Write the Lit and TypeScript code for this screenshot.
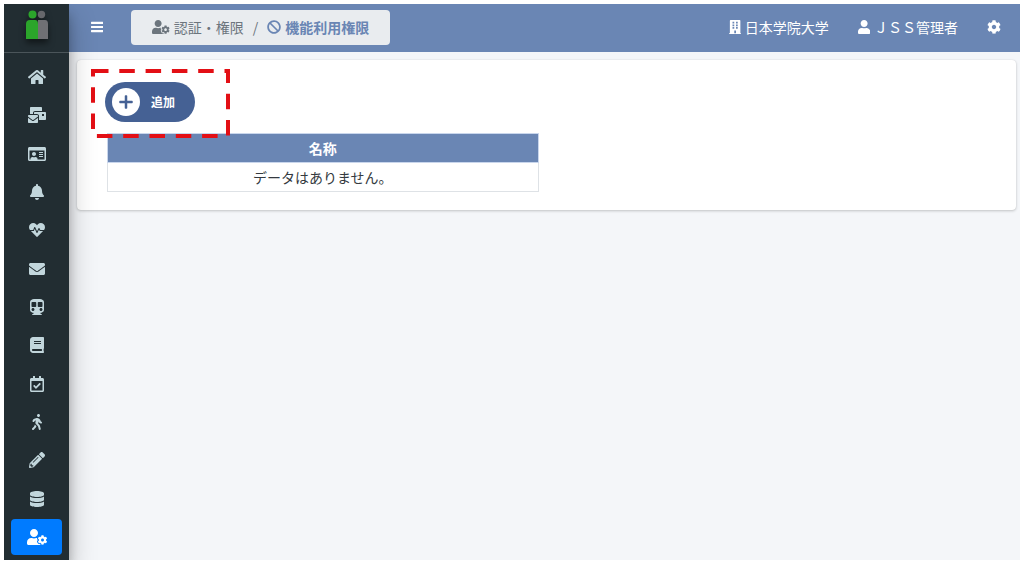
import { LitElement, html, css, svg } from "lit";
import { customElement, property } from "lit/decorators.js";
import { classMap } from "lit/directives/class-map.js";

interface Glyph {
  w: number;
  d: string;
}

const ICONS: Record<string, Glyph> = {
  home: { w: 576, d: "M280.37 148.26L96 300.11V464a16 16 0 0 0 16 16l112.06-.29a16 16 0 0 0 15.92-16V368a16 16 0 0 1 16-16h64a16 16 0 0 1 16 16v95.64a16 16 0 0 0 16 16.05L464 480a16 16 0 0 0 16-16V300L295.67 148.26a12.19 12.19 0 0 0-15.3 0zM571.6 251.47L488 182.56V44.05a12 12 0 0 0-12-12h-56a12 12 0 0 0-12 12v72.61L318.47 43a48 48 0 0 0-61 0L4.34 251.47a12 12 0 0 0-1.6 16.9l25.5 31A12 12 0 0 0 45.15 301l235.22-193.74a12.19 12.19 0 0 1 15.3 0L530.9 301a12 12 0 0 0 16.9-1.6l25.5-31a12 12 0 0 0-1.7-16.93z" },
  mails: { w: 576, d: "M160 448c-25.6 0-51.2-22.4-64-32-64-44.8-83.2-60.8-96-70.4V480c0 17.67 14.33 32 32 32h256c17.67 0 32-14.33 32-32V345.6c-12.8 9.6-32 25.6-96 70.4-12.8 9.6-38.4 32-64 32zm128-192H32c-17.67 0-32 14.33-32 32v16c25.6 19.2 22.4 19.2 115.2 86.4 9.6 6.4 28.8 25.6 44.8 25.6s35.2-19.2 44.8-22.4c92.8-67.2 89.6-67.2 115.2-86.4V288c0-17.67-14.33-32-32-32zm256-96H224c-17.67 0-32 14.33-32 32v32h96c33.21 0 60.59 25.42 63.71 57.82l.29-.22V416h192c17.67 0 32-14.33 32-32V192c0-17.67-14.33-32-32-32zm-32 128h-64v-64h64v64zm-352-96c0-35.29 28.71-64 64-64h224V32c0-17.67-14.33-32-32-32H96C78.33 0 64 14.33 64 32v192h96v-32z" },
  idCard: { w: 576, d: "M528 32H48C21.5 32 0 53.5 0 80v352c0 26.5 21.5 48 48 48h480c26.5 0 48-21.5 48-48V80c0-26.5-21.5-48-48-48zm0 400H303.2c.9-4.5.8 3.6.8-22.4 0-31.8-30.1-57.6-67.2-57.6-10.8 0-18.7 8-44.8 8-26.9 0-33.4-8-44.8-8-37.1 0-67.2 25.8-67.2 57.6 0 26-.2 17.9.8 22.4H48V144h480v288zm-168-80h112c4.4 0 8-3.6 8-8v-16c0-4.4-3.6-8-8-8H360c-4.4 0-8 3.6-8 8v16c0 4.4 3.6 8 8 8zm0-64h112c4.4 0 8-3.6 8-8v-16c0-4.4-3.6-8-8-8H360c-4.4 0-8 3.6-8 8v16c0 4.4 3.6 8 8 8zm0-64h112c4.4 0 8-3.6 8-8v-16c0-4.4-3.6-8-8-8H360c-4.4 0-8 3.6-8 8v16c0 4.4 3.6 8 8 8zm-168 96c35.3 0 64-28.7 64-64s-28.7-64-64-64-64 28.7-64 64 28.7 64 64 64z" },
  bell: { w: 448, d: "M224 512c35.32 0 63.97-28.65 63.97-64H160.03c0 35.35 28.65 64 63.97 64zm215.39-149.71c-19.32-20.76-55.47-51.99-55.47-154.29 0-77.7-54.48-139.9-127.94-155.16V32c0-17.67-14.32-32-31.98-32s-31.98 14.33-31.98 32v20.84C118.56 68.1 64.08 130.3 64.08 208c0 102.3-36.15 133.53-55.47 154.29-6 6.45-8.66 14.16-8.61 21.71.11 16.4 12.98 32 32.1 32h383.8c19.12 0 32-15.6 32.1-32 .05-7.55-2.61-15.27-8.61-21.71z" },
  heart: { w: 512, d: "M320.2 243.8l-49.7 99.4c-6 12.1-23.4 11.7-28.9-.6l-56.9-126.3-30 71.7H60.6l182.5 186.5c7.1 7.3 18.6 7.3 25.7 0L451.4 288H342.3l-22.1-44.2zM473.7 73.9l-2.4-2.5c-51.5-52.6-135.8-52.6-187.4 0L256 100l-27.9-28.5c-51.5-52.7-135.9-52.7-187.4 0l-2.4 2.4C-10.4 123.7-12.5 203 31 256h102.4l35.9-86.2c5.4-12.9 23.6-13.2 29.4-.4l58.2 129.3 49-97.9c5.9-11.8 22.7-11.8 28.6 0l27.6 55.2H481c43.5-53 41.4-132.3-7.3-182.1z" },
  envelope: { w: 512, d: "M502.3 190.8c3.9-3.1 9.7-.2 9.7 4.7V400c0 26.5-21.5 48-48 48H48c-26.5 0-48-21.5-48-48V195.6c0-5 5.7-7.8 9.7-4.7 22.4 17.4 52.1 39.5 154.1 113.6 21.1 15.4 56.7 47.8 92.2 47.6 35.7.3 72-32.8 92.3-47.6 102-74.1 131.6-96.3 154-113.7zM256 320c23.2.4 56.6-29.2 73.4-41.4 132.7-96.3 142.8-104.7 173.4-128.7 5.8-4.5 9.2-11.5 9.2-18.9v-19c0-26.5-21.5-48-48-48H48c-26.5 0-48 21.5-48 48v19c0 7.4 3.4 14.3 9.2 18.9 30.6 23.9 40.7 32.4 173.4 128.7 16.8 12.2 50.2 41.8 73.4 41.4z" },
  subway: { w: 448, d: "M448 96v256c0 51.815-61.624 96-130.022 96l62.98 49.721C386.905 502.417 383.562 512 376 512H72c-7.578 0-10.892-9.594-4.957-14.279L130.022 448C61.82 448 0 403.954 0 352V96C0 42.981 64 0 128 0h192c65 0 128 42.981 128 96zM200 232V120c0-13.255-10.745-24-24-24H72c-13.255 0-24 10.745-24 24v112c0 13.255 10.745 24 24 24h104c13.255 0 24-10.745 24-24zm200 0V120c0-13.255-10.745-24-24-24H272c-13.255 0-24 10.745-24 24v112c0 13.255 10.745 24 24 24h104c13.255 0 24-10.745 24-24zm-48 56c-26.51 0-48 21.49-48 48s21.49 48 48 48 48-21.49 48-48-21.49-48-48-48zm-256 0c-26.51 0-48 21.49-48 48s21.49 48 48 48 48-21.49 48-48-21.49-48-48-48z" },
  book: { w: 448, d: "M448 360V24c0-13.3-10.7-24-24-24H96C43 0 0 43 0 96v320c0 53 43 96 96 96h328c13.3 0 24-10.7 24-24v-16c0-7.5-3.5-14.3-8.9-18.7-4.2-15.4-4.2-59.3 0-74.7 5.4-4.3 8.9-11.1 8.9-18.6zM128 134c0-3.3 2.7-6 6-6h212c3.3 0 6 2.7 6 6v20c0 3.3-2.7 6-6 6H134c-3.3 0-6-2.7-6-6v-20zm0 64c0-3.3 2.7-6 6-6h212c3.3 0 6 2.7 6 6v20c0 3.3-2.7 6-6 6H134c-3.3 0-6-2.7-6-6v-20zm253.4 250H96c-17.7 0-32-14.3-32-32 0-17.6 14.4-32 32-32h285.4c-1.9 17.1-1.9 46.9 0 64z" },
  calendar: { w: 448, d: "M400 64h-48V12c0-6.627-5.373-12-12-12h-40c-6.627 0-12 5.373-12 12v52H160V12c0-6.627-5.373-12-12-12h-40c-6.627 0-12 5.373-12 12v52H48C21.49 64 0 85.49 0 112v352c0 26.51 21.49 48 48 48h352c26.51 0 48-21.49 48-48V112c0-26.51-21.49-48-48-48zm-6 400H54a6 6 0 0 1-6-6V160h352v298a6 6 0 0 1-6 6zm-52.849-200.65L198.842 404.519c-4.705 4.667-12.303 4.637-16.971-.068l-75.091-75.699c-4.667-4.705-4.637-12.303.068-16.971l22.719-22.536c4.705-4.667 12.303-4.637 16.97.069l44.104 44.461 111.072-110.181c4.705-4.667 12.303-4.637 16.971.068l22.536 22.718c4.667 4.705 4.636 12.303-.069 16.97z" },
  walking: { w: 320, d: "M208 96c26.5 0 48-21.5 48-48S234.5 0 208 0s-48 21.5-48 48 21.5 48 48 48zm94.5 149.1l-23.3-11.8-9.7-29.4c-14.7-44.6-55.7-75.8-102.2-75.9-36-.1-55.9 10.1-93.3 25.2-21.6 8.7-39.3 25.2-49.7 46.2L17.6 213c-7.8 15.8-1.5 35 14.2 42.9 15.6 7.9 34.6 1.5 42.5-14.3L81 228c3.5-7 9.3-12.5 16.5-15.4l26.8-10.8-15.2 60.7c-5.2 20.8.4 42.9 14.9 58.8l59.9 65.4c7.2 7.9 12.3 17.4 14.9 27.7l18.3 73.3c4.3 17.1 21.7 27.6 38.8 23.3 17.1-4.3 27.6-21.7 23.3-38.8l-22.2-89c-2.6-10.3-7.7-19.9-14.9-27.7l-45.5-49.7 17.2-68.7 5.5 16.5c5.3 16.1 16.7 29.4 31.7 37l23.3 11.8c15.6 7.9 34.6 1.5 42.5-14.3 7.7-15.7 1.4-35.1-14.3-43zM73.6 385.8c-3.2 8.1-8 15.4-14.2 21.5l-50 50.1c-12.5 12.5-12.5 32.8 0 45.3s32.7 12.5 45.2 0l59.4-59.4c6.1-6.1 10.9-13.4 14.2-21.5l13.5-33.8c-55.3-60.3-38.7-41.8-47.4-53.7l-20.7 51.5z" },
  pencil: { w: 512, d: "M497.9 142.1l-46.1 46.1c-4.7 4.7-12.3 4.7-17 0l-111-111c-4.7-4.7-4.7-12.3 0-17l46.1-46.1c18.7-18.7 49.1-18.7 67.9 0l60.1 60.1c18.8 18.7 18.8 49.1 0 67.9zM284.2 99.8L21.6 362.4.4 483.9c-2.9 16.4 11.4 30.6 27.8 27.8l121.5-21.3 262.6-262.6c4.7-4.7 4.7-12.3 0-17l-111-111c-4.8-4.7-12.4-4.7-17.1 0zM124.1 339.9c-5.5-5.5-5.5-14.3 0-19.8l154-154c5.5-5.5 14.3-5.5 19.8 0s5.5 14.3 0 19.8l-154 154c-5.5 5.5-14.3 5.5-19.8 0zM88 424h48v36.3l-64.5 11.3-31.1-31.1L51.7 376H88v48z" },
  database: { w: 448, d: "M448 73.143v45.714C448 159.143 347.667 192 224 192S0 159.143 0 118.857V73.143C0 32.857 100.333 0 224 0s224 32.857 224 73.143zM448 176v102.857C448 319.143 347.667 352 224 352S0 319.143 0 278.857V176c48.125 33.143 136.208 48.572 224 48.572S399.874 209.143 448 176zm0 160v102.857C448 479.143 347.667 512 224 512S0 479.143 0 438.857V336c48.125 33.143 136.208 48.572 224 48.572S399.874 369.143 448 336z" },
  userCog: { w: 640, d: "M610.5 373.3c2.6-14.1 2.6-28.5 0-42.6l25.8-14.9c3-1.7 4.3-5.2 3.3-8.5-6.7-21.6-18.2-41.2-33.2-57.4-2.3-2.5-6-3.1-9-1.4l-25.8 14.9c-10.9-9.3-23.4-16.5-36.9-21.3v-29.8c0-3.4-2.4-6.4-5.7-7.1-22.3-5-45-4.8-66.2 0-3.3.7-5.7 3.7-5.7 7.1v29.8c-13.5 4.8-26 12-36.9 21.3l-25.8-14.9c-2.9-1.7-6.7-1.1-9 1.4-15 16.2-26.5 35.8-33.2 57.4-1 3.3.4 6.8 3.3 8.5l25.8 14.9c-2.6 14.1-2.6 28.5 0 42.6l-25.8 14.9c-3 1.7-4.3 5.2-3.3 8.5 6.7 21.6 18.2 41.1 33.2 57.4 2.3 2.5 6 3.1 9 1.4l25.8-14.9c10.9 9.3 23.4 16.5 36.9 21.3v29.8c0 3.4 2.4 6.4 5.7 7.1 22.3 5 45 4.8 66.2 0 3.3-.7 5.7-3.7 5.7-7.1v-29.8c13.5-4.8 26-12 36.9-21.3l25.8 14.9c2.9 1.7 6.7 1.1 9-1.4 15-16.2 26.5-35.8 33.2-57.4 1-3.3-.4-6.8-3.3-8.5l-25.8-14.9zM496 400.5c-26.8 0-48.5-21.8-48.5-48.5s21.8-48.5 48.5-48.5 48.5 21.8 48.5 48.5-21.7 48.5-48.5 48.5zM224 256c70.7 0 128-57.3 128-128S294.7 0 224 0 96 57.3 96 128s57.3 128 128 128zm201.2 226.5c-2.3-1.2-4.6-2.6-6.8-3.9l-7.9 4.6c-6 3.4-12.8 5.3-19.6 5.3-10.9 0-21.4-4.6-28.9-12.6-18.3-19.8-32.3-43.9-40.2-69.6-5.5-17.7 1.9-36.4 17.9-45.7l7.9-4.6c-.1-2.6-.1-5.2 0-7.8l-7.9-4.6c-16-9.2-23.4-28-17.9-45.7.9-2.9 2.2-5.8 3.2-8.7-3.8-.3-7.5-1.2-11.4-1.2h-16.7c-22.2 10.2-46.9 16-72.9 16s-50.6-5.8-72.9-16h-16.7C60.2 288 0 348.2 0 422.4V464c0 26.5 21.5 48 48 48h352c10.1 0 19.5-3.2 27.2-8.5-1.2-3.8-2-7.7-2-11.8v-9.2z" },
  ban: { w: 512, d: "M256 8C119.034 8 8 119.033 8 256s111.034 248 248 248 248-111.034 248-248S392.967 8 256 8zm130.108 117.892c65.448 65.448 70 165.481 20.677 235.637L150.47 105.216c70.204-49.356 170.226-44.735 235.638 20.676zM125.892 386.108c-65.448-65.448-70-165.481-20.677-235.637L361.53 406.784c-70.203 49.356-170.226 44.736-235.638-20.676z" },
  building: { w: 448, d: "M436 480h-20V24c0-13.3-10.7-24-24-24H56C42.7 0 32 10.7 32 24v456H12c-6.6 0-12 5.4-12 12v20h448v-20c0-6.6-5.4-12-12-12zM128 64v64h64V64zM256 64v64h64V64zM128 160v64h64v-64zM256 160v64h64v-64zM128 256v64h64v-64zM256 256v64h64v-64zM192 384v96h64v-96z" },
  user: { w: 448, d: "M224 256c70.7 0 128-57.3 128-128S294.7 0 224 0 96 57.3 96 128s57.3 128 128 128zm89.6 32h-16.7c-22.2 10.2-46.9 16-72.9 16s-50.6-5.8-72.9-16h-16.7C60.2 288 0 348.2 0 422.4V464c0 26.5 21.5 48 48 48h352c26.5 0 48-21.5 48-48v-41.6c0-74.2-60.2-134.4-134.4-134.4z" },
  cog: { w: 512, d: "M487.4 315.7l-42.6-24.6c4.3-23.2 4.3-47 0-70.2l42.6-24.6c4.9-2.8 7.1-8.6 5.5-14-11.1-35.6-30-67.8-54.7-94.6-3.8-4.1-10-5.1-14.8-2.3L380.8 110c-17.9-15.4-38.5-27.3-60.8-35.1V25.8c0-5.6-3.9-10.5-9.4-11.7-36.7-8.2-74.3-7.8-109.2 0-5.5 1.2-9.4 6.1-9.4 11.7V75c-22.2 7.9-42.8 19.8-60.8 35.1L88.7 85.5c-4.9-2.8-11-1.9-14.8 2.3-24.7 26.7-43.6 58.9-54.7 94.6-1.7 5.4.6 11.2 5.5 14L67.3 221c-4.3 23.2-4.3 47 0 70.2l-42.6 24.6c-4.9 2.8-7.1 8.6-5.5 14 11.1 35.6 30 67.8 54.7 94.6 3.8 4.1 10 5.1 14.8 2.3l42.6-24.6c17.9 15.4 38.5 27.3 60.8 35.1v49.2c0 5.6 3.9 10.5 9.4 11.7 36.7 8.2 74.3 7.8 109.2 0 5.5-1.2 9.4-6.1 9.4-11.7v-49.2c22.2-7.9 42.8-19.8 60.8-35.1l42.6 24.6c4.9 2.8 11 1.9 14.8-2.3 24.7-26.7 43.6-58.9 54.7-94.6 1.5-5.5-.7-11.3-5.6-14.1zM256 336c-44.1 0-80-35.9-80-80s35.9-80 80-80 80 35.9 80 80-35.9 80-80 80z" },
  bars: { w: 448, d: "M16 68h416a16 16 0 0 1 16 16v48a16 16 0 0 1-16 16H16a16 16 0 0 1-16-16V84a16 16 0 0 1 16-16zM16 216h416a16 16 0 0 1 16 16v48a16 16 0 0 1-16 16H16a16 16 0 0 1-16-16v-48a16 16 0 0 1 16-16zM16 364h416a16 16 0 0 1 16 16v48a16 16 0 0 1-16 16H16a16 16 0 0 1-16-16v-48a16 16 0 0 1 16-16z" },
  plus: { w: 448, d: "M416 216H264V64c0-14-10-24-24-24h-32c-14 0-24 10-24 24v152H32c-14 0-24 10-24 24v32c0 14 10 24 24 24h152v152c0 14 10 24 24 24h32c14 0 24-10 24-24V296h152c14 0 24-10 24-24v-32c0-14-10-24-24-24z" },
};

@customElement("ui-icon")
class UiIcon extends LitElement {
  @property() name = "home";

  static styles = css`
    :host { display: block; flex: none; height: 14px; }
    .glyph { display: block; height: 100%; width: auto; fill: currentColor; fill-rule: evenodd; }
  `;

  render() {
    const icon = ICONS[this.name];
    return html`<svg class="glyph" viewBox="0 0 ${icon.w} 512" aria-hidden="true">${svg`<path d=${icon.d}></path>`}</svg>`;
  }
}

const MENU = [
  { icon: "home", label: "ホーム" },
  { icon: "mails", label: "お知らせ" },
  { icon: "idCard", label: "学生証" },
  { icon: "bell", label: "通知" },
  { icon: "heart", label: "健康" },
  { icon: "envelope", label: "メール" },
  { icon: "subway", label: "通学" },
  { icon: "book", label: "履修" },
  { icon: "calendar", label: "出欠" },
  { icon: "walking", label: "行動" },
  { icon: "pencil", label: "アンケート" },
  { icon: "database", label: "データ" },
  { icon: "userCog", label: "認証・権限", active: true },
];

@customElement("side-menu")
class SideMenu extends LitElement {
  static styles = css`
    :host {
      display: flex;
      flex-direction: column;
      background: #222d32;
      box-shadow: 0 14px 28px rgba(0, 0, 0, 0.25), 0 10px 10px rgba(0, 0, 0, 0.22);
      position: relative;
      z-index: 1;
    }
    .brand {
      display: flex;
      justify-content: center;
      box-sizing: border-box;
      height: 49px;
      padding-top: 6px;
      border-bottom: 1px solid #4b555a;
    }
    .logo { display: block; width: 24px; height: 30px; filter: drop-shadow(0 4px 3px rgba(0, 0, 0, 0.5)); }
    .items {
      display: flex;
      flex: 1;
      flex-direction: column;
      justify-content: space-between;
      padding: 6px 7px 5px;
    }
    .item {
      display: flex;
      align-items: center;
      justify-content: center;
      height: 36px;
      border-radius: 4px;
      color: #c2d6dc;
    }
    .item.active { background: #007bff; color: #fff; }
    .icon { height: 16px; }
  `;

  render() {
    return html`
      <a class="brand" href="#" aria-label="トップ">
        <svg class="logo" viewBox="0 0 24 30" aria-hidden="true">
          <circle cx="16.5" cy="4.5" r="3.7" fill="#66676b"></circle>
          <path d="M13 10h7q3 0 3 4v15H13z" fill="#6f7074"></path>
          <circle cx="7.5" cy="4.5" r="4" fill="#2ba52b"></circle>
          <path d="M1 29V14q0-4 4-4h5q3 0 3 4v15z" fill="#2ba52b"></path>
        </svg>
      </a>
      <nav class="items" aria-label="メニュー">
        ${MENU.map(
          (m) => html`<a class=${classMap({ item: true, active: !!m.active })} href="#" aria-label=${m.label}>
            <ui-icon class="icon" name=${m.icon}></ui-icon>
          </a>`
        )}
      </nav>
    `;
  }
}

@customElement("top-bar")
class TopBar extends LitElement {
  static styles = css`
    :host {
      display: flex;
      align-items: center;
      box-sizing: border-box;
      height: 48px;
      padding: 0 19px 2px 22px;
      background: #6a86b4;
      color: #fff;
    }
    .toggle {
      padding: 0;
      border: 0;
      background: none;
      color: inherit;
      cursor: pointer;
    }
    .trail {
      display: flex;
      align-items: center;
      gap: 9px;
      box-sizing: border-box;
      height: 35px;
      margin-left: 28px;
      padding: 0 21px;
      border-radius: 4px;
      background: #e9ecef;
      color: #6c757d;
    }
    .link {
      display: flex;
      align-items: center;
      gap: 4px;
      color: inherit;
      text-decoration: none;
      white-space: nowrap;
    }
    .here { color: #6a86b4; font-weight: 700; }
    .side { display: flex; align-items: center; gap: 29px; margin-left: auto; }
  `;

  render() {
    return html`
      <button class="toggle" type="button" aria-label="メニュー切替"><ui-icon name="bars"></ui-icon></button>
      <nav class="trail" aria-label="現在位置">
        <a class="link" href="#"><ui-icon name="userCog"></ui-icon>認証・権限</a>
        <span>/</span>
        <a class="link here" href="#" aria-current="page"><ui-icon name="ban"></ui-icon>機能利用権限</a>
      </nav>
      <div class="side">
        <a class="link" href="#"><ui-icon name="building"></ui-icon>日本学院大学</a>
        <a class="link" href="#"><ui-icon name="user"></ui-icon>ＪＳＳ管理者</a>
        <a class="link" href="#" aria-label="設定"><ui-icon name="cog"></ui-icon></a>
      </div>
    `;
  }
}

@customElement("app-root")
class AppRoot extends LitElement {
  static styles = css`
    :host {
      display: block;
      box-sizing: border-box;
      min-height: 100vh;
      padding: 4px;
      background: #fff;
      color: #343a40;
      font: 14px/20px "Noto Sans CJK JP", sans-serif;
    }
    .shell {
      display: grid;
      grid-template-columns: 65px minmax(0, 1fr);
      min-height: calc(100vh - 8px);
      overflow: hidden;
      background: #f4f6f9;
    }
    .card {
      margin: 8px 4px 8px 8px;
      padding: 22px 28px 18px 30px;
      border-radius: 4px;
      background: #fff;
      box-shadow: 0 0 1px rgba(0, 0, 0, 0.13), 0 1px 3px rgba(0, 0, 0, 0.2);
    }
    .tools { display: flex; position: relative; margin: 0 0 11px -2px; }
    .add {
      display: flex;
      align-items: center;
      gap: 11px;
      height: 40px;
      padding: 0 20px 0 7px;
      border: 0;
      border-radius: 20px;
      background: #456194;
      color: #fff;
      font: 700 12px/20px "Noto Sans CJK JP", sans-serif;
      cursor: pointer;
    }
    .disc {
      display: flex;
      align-items: center;
      justify-content: center;
      width: 28px;
      height: 28px;
      border-radius: 50%;
      background: #fff;
      color: #456194;
    }
    .plus { height: 16px; }
    .mark {
      position: absolute;
      top: -13px;
      left: -14px;
      width: 139px;
      height: 69px;
      pointer-events: none;
    }
    .columns { display: grid; grid-template-columns: 1fr 1fr; gap: 18px; }
    .list { width: 100%; border-collapse: collapse; }
    .cell { height: 28px; padding: 0; border: 1px solid #dee2e6; text-align: center; }
    .head { background: #6a86b4; color: #fff; border-color: #c9d6ec; }
  `;

  render() {
    return html`
      <div class="shell">
        <side-menu></side-menu>
        <div>
          <top-bar></top-bar>
          <main class="card">
            <div class="tools">
              <button class="add" type="button">
                <span class="disc"><ui-icon class="plus" name="plus"></ui-icon></span>追加
              </button>
              <svg class="mark" viewBox="0 0 139 69" aria-hidden="true">
                <rect x="2" y="2" width="135" height="65" fill="none" stroke="#e30f15" stroke-width="4" stroke-dasharray="15.5 10.8"></rect>
              </svg>
            </div>
            <div class="columns">
              <table class="list">
                <thead><tr><th class="cell head" scope="col">名称</th></tr></thead>
                <tbody><tr><td class="cell">データはありません。</td></tr></tbody>
              </table>
            </div>
          </main>
        </div>
      </div>
    `;
  }
}
